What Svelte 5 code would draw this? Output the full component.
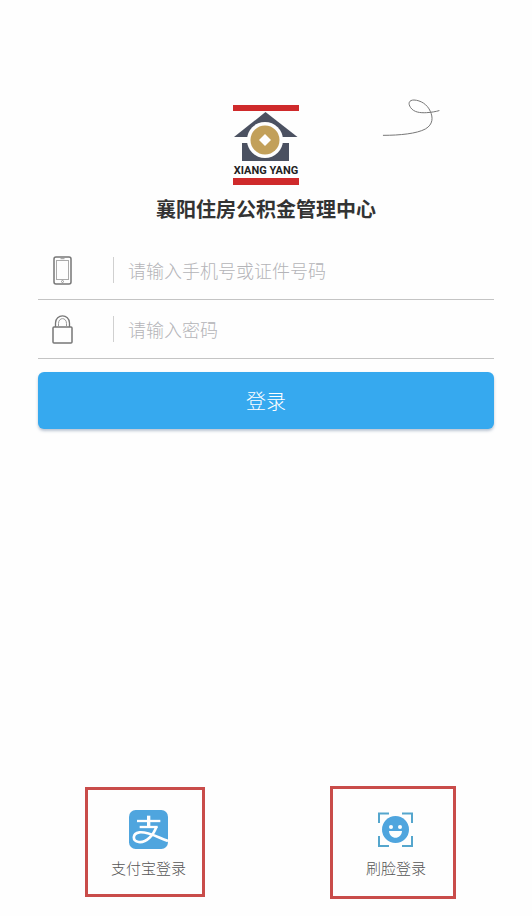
<script lang="ts">
	let account = $state('');
	let password = $state('');
</script>

<main class="page">
	<header class="brand">
		<svg class="logo" viewBox="0 0 68 80" role="img" aria-label="XIANG YANG">
			<rect x="1" y="0" width="66" height="6" fill="#cf2a2b" />
			<path d="M33.5 7 L65.5 32 H2 Z" fill="#4b5161" />
			<rect x="10" y="38" width="47" height="18" fill="#4b5161" />
			<circle cx="33" cy="35" r="18" fill="#fefefe" />
			<circle cx="33" cy="35" r="14.5" fill="#c2a05a" />
			<path d="M33 29 L39 35 L33 41 L27 35 Z" fill="#fefefe" />
			<text x="34" y="69" text-anchor="middle" class="logo-text">XIANG YANG</text>
			<rect x="1" y="73" width="66" height="7" fill="#cf2a2b" />
		</svg>
		<svg class="squiggle" viewBox="36 42 174 114" aria-hidden="true">
			<path d="M40 151 C90 151 140 146 166 132 C190 118 189 97 181 79 C172 58 152 46 132 45 C117 45 113 55 122 68 C132 82 150 84 170 83 C184 82 197 80 207 77" />
		</svg>
	</header>

	<h1 class="title">襄阳住房公积金管理中心</h1>

	<form onsubmit={(e) => e.preventDefault()}>
		<div class="row">
			<label for="account" aria-label="手机号或证件号码">
				<svg class="field-icon" viewBox="0 0 24 30">
					<rect x="3" y="2" width="17" height="27" rx="2" stroke-width="1.5" />
					<rect x="5.5" y="5.5" width="12" height="19" stroke="#aaa" />
					<path d="M9.5 3.700 H13.5" stroke="#999" />
					<circle cx="11.5" cy="26.5" r="1" stroke="#999" />
				</svg>
			</label>
			<input id="account" type="text" autocomplete="username" placeholder="请输入手机号或证件号码" bind:value={account} />
		</div>
		<div class="row">
			<label for="password" aria-label="密码">
				<svg class="field-icon" viewBox="0 0 24 30">
					<rect x="2" y="13" width="19" height="16" rx="1" stroke-width="1.5" />
					<path d="M4.500 13 V9 C4.500 -0.500 18.500 -0.500 18.500 9 V13" stroke-width="1.3" />
					<path d="M7.5 13 V9.5 C7.5 3 15.5 3 15.5 9.5 V13" stroke="#999" />
				</svg>
			</label>
			<input id="password" type="password" autocomplete="current-password" placeholder="请输入密码" bind:value={password} />
		</div>
		<button type="submit" class="submit">登录</button>
	</form>

	<footer class="others">
		<button type="button" class="other alipay">
			<svg class="other-icon" viewBox="0 0 117 117" aria-hidden="true">
				<rect width="117" height="117" rx="20" fill="#4fa5de" />
				<g fill="none" stroke="#fefefe" stroke-width="7">
					<path d="M24 33 H94" />
					<path d="M59 17 V52" stroke-width="10" />
					<path d="M32 51 H86" />
					<path d="M82 50 C75 74 52 99 29 96 C9 93 10 70 31 67 C56 64 82 80 117 93" stroke-width="8" />
				</g>
			</svg>
			支付宝登录
		</button>
		<button type="button" class="other face">
			<svg class="other-icon" viewBox="0 0 39 39" aria-hidden="true">
				<path d="M3 13 V3.500 H13 M26 3.500 H36 V13 M36 26 V36 H26 M13 36 H3 V26" fill="none" stroke="#55a6cd" stroke-width="2" />
				<circle cx="19.5" cy="19.5" r="13.5" fill="#4fa5de" />
				<circle cx="15" cy="17" r="2" fill="#fefefe" />
				<circle cx="24" cy="17" r="2" fill="#fefefe" />
				<path d="M13 21 H26 C25.5 30 13.5 30 13 21 Z" fill="#fefefe" />
			</svg>
			刷脸登录
		</button>
	</footer>
</main>

<style>
:global(body) { margin: 0; background: #fefefe; }

.page {
	min-height: 100vh; box-sizing: border-box;
	display: flex; flex-direction: column;
	padding: 99px 38px 17px;
	font-family: "Noto Sans CJK SC", sans-serif;
}

/* Logo stays centred, the pen stroke fills the right column */
.brand { display: grid; grid-template-columns: 1fr 68px 1fr; align-items: start; }
.logo { grid-column: 2; width: 68px; height: 80px; margin-top: 6px; }
.logo-text { font-family: Roboto, sans-serif; font-size: 11px; font-weight: 700; fill: #222; }
.squiggle { width: 58px; height: 38px; margin-left: 82px; }
.squiggle path { fill: none; stroke: #777; stroke-width: 3; stroke-linecap: round; }

.title {
	margin: 9px 0 17px; text-align: center;
	font-size: 20px; line-height: 30px; font-weight: 700; color: #333;
}

.row { display: flex; align-items: center; height: 58px; border-bottom: 1px solid #c4c4c4; }
label {
	flex: none; width: 76px; height: 26px; box-sizing: border-box;
	display: flex; align-items: center;
	padding-left: 13px; border-right: 1px solid #d0d0d0;
}
label + input { margin-left: 14px; }
.field-icon { width: 24px; height: 30px; flex: none; fill: none; stroke: #777; }
input {
	flex: 1; min-width: 0; padding: 0; border: none; outline: none; background: none;
	font-family: inherit; font-size: 18px; line-height: 26px; font-weight: 300; color: #333;
}
input::placeholder { color: #b4b4b8; opacity: 1; }

.submit {
	display: block; width: 100%; height: 57px; margin-top: 13px; padding: 0;
	border: none; border-radius: 6px; background: #36a9ef; color: #fff;
	box-shadow: 0 2px 3px rgba(60,90,130,0.35);
	font-family: inherit; font-size: 20px; line-height: 30px; font-weight: 300; cursor: pointer;
}
.submit:hover { background: #2b9de3; }

.others {
	margin-top: auto; padding: 0 38px 0 47px;
	display: flex; justify-content: space-between; align-items: flex-end;
}
.other {
	display: flex; flex-direction: column; align-items: center; gap: 9px;
	border: 3px solid #c94c4a; background: none; cursor: pointer;
	font-family: inherit; font-size: 15px; line-height: 20px; font-weight: 300; color: #555;
}
.alipay { padding: 20px 16px 16px 23px; margin-bottom: 2px; }
.face { padding: 21px 27px 18px 33px; }
.other-icon { width: 39px; height: 39px; }
</style>
